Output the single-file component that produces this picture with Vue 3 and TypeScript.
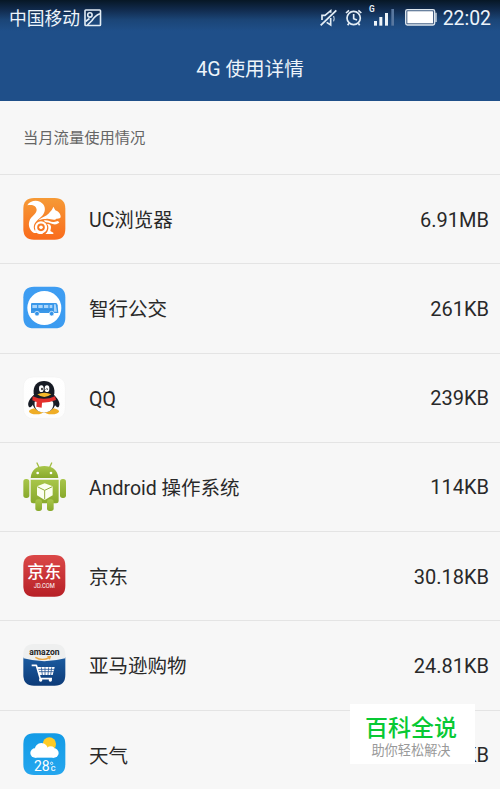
<template>
  <div class="screen">
    <header class="header">
      <div class="status-bar">
        <span class="carrier">中国移动</span>
        <svg class="picture" width="18" height="18" viewBox="0 0 18 18" fill="none" stroke="#e3edf5" stroke-width="1.6">
          <rect x="1" y="1" width="15.5" height="15.5" rx="0.8" />
          <circle cx="5.9" cy="5.9" r="2.2" />
          <path d="M1.5 12.5 L5.5 9.5 M3.5 16 L8 11.5 Q11 6.5 16 4.8" />
        </svg>

        <!-- 静音 / 闹钟 / 信号 / 电池 -->
        <svg class="status-icons" width="120" height="30" viewBox="0 0 360 90">
          <g fill="none" stroke="#e3edf5" stroke-width="5">
            <path d="M6 60 V46 H15 L32 32 V38 M32 54 V75 L20 67" />
            <path d="M2 76 L49 31" stroke-width="5.5" />
            <path d="M41 48 Q44 56 41 64" stroke-width="3" />
            <circle cx="101" cy="54" r="20" />
            <path d="M101 42 V56 L111 60 M78 39 L87 31 M115 31 L124 39 M87 70 L83 76 M115 70 L119 76" />
          </g>
          <text x="147" y="37" class="net">G</text>
          <rect x="162" y="63" width="9" height="14" fill="#eef4f8" />
          <rect x="178" y="51" width="9" height="26" fill="#eef4f8" />
          <rect x="195" y="39" width="9" height="38" fill="#eef4f8" />
          <rect x="214" y="27" width="8" height="50" fill="#58779f" />
          <rect x="257" y="29" width="87" height="46" rx="5" fill="#456085" stroke="#dce5ed" stroke-width="4" />
          <rect x="262" y="34" width="77" height="36" rx="1" fill="#fff" />
          <path d="M346 40 H348 V64 H346" stroke="#dce5ed" stroke-width="4" fill="none" />
        </svg>
        <span class="clock">22:02</span>
      </div>
      <h1 class="title">4G 使用详情</h1>
    </header>

    <div class="section">当月流量使用情况</div>

    <ul class="list">
      <li v-for="app in apps" :key="app.id" class="row">
        <svg class="icon" width="60" height="60" :viewBox="`0 ${app.shift} 180 180`">
          <defs>
            <linearGradient :id="'bg-' + app.id" x1="0" y1="0" x2="0" y2="1">
              <stop offset="0" :stop-color="app.colors[0]" />
              <stop offset="1" :stop-color="app.colors[1]" />
            </linearGradient>
          </defs>
          <path v-if="app.id !== 'android' && app.id !== 'amazon'" :d="tile" :fill="`url(#bg-${app.id})`" />

          <!-- 松鼠 -->
          <g v-if="app.id === 'uc'">
            <path
              d="M37 46 C43 33 62 29 75 35 C91 43 94 60 84 74 C77 84 63 91 58 103 C54 114 58 124 67 129 H57 C44 122 39 107 43 94 C47 79 64 73 65 60 C65 48 52 42 37 46 Z"
              fill="#fff"
            />
            <path
              d="M70 91 C80 82 94 79 102 70 C105 64 112 61 115 50 L121 61 C130 64 138 72 137 82 C134 88 125 84 121 89 C112 91 103 85 93 87 C85 87 77 88 70 91 Z"
              fill="#fff"
            />
            <path d="M86 92 C98 88 106 98 117 96 L129 93 L133 98 L124 103 C112 105 104 97 93 97 Z" fill="#fff" />
            <path d="M96 102 C104 101 109 106 108 113 L106 123 L115 128 V132 H91 C101 124 103 110 96 102 Z" fill="#fff" />
            <circle cx="78" cy="112" r="15" fill="none" stroke="#fff" stroke-width="7" />
            <circle cx="78" cy="112" r="5.5" fill="#fff" />
            <path d="M60 121 Q67 132 83 130" fill="none" stroke="#fff" stroke-width="4" />
          </g>

          <!-- 公交车 -->
          <g v-else-if="app.id === 'bus'">
            <circle cx="88" cy="88" r="51" fill="#fff" />
            <path d="M50 73 H122 Q127 73 128 80 L130 103 H48 V75 Z" fill="#3b98e9" />
            <path d="M52 79 H66 V88 H52 Z M70 79 H83 V88 H70 Z M87 79 H100 V88 H87 Z M104 79 H112 V88 H104 Z M117 77 H122 L126 99 H117 Z" fill="#a9d5fb" />
            <path d="M50 93 H112" stroke="#2e8add" stroke-width="2" />
            <circle cx="66" cy="105" r="7" fill="#3493e8" stroke="#fff" stroke-width="2" />
            <circle cx="110" cy="105" r="7" fill="#3493e8" stroke="#fff" stroke-width="2" />
          </g>

          <!-- 企鹅 -->
          <g v-else-if="app.id === 'qq'">
            <path :d="tile" fill="none" stroke="#efefef" stroke-width="1.5" />
            <ellipse cx="64" cy="127" rx="22" ry="9" fill="#efad27" />
            <ellipse cx="110" cy="127" rx="22" ry="9" fill="#efad27" />
            <path d="M57 78 C41 90 35 107 43 115 C50 116 54 106 58 99 Z M116 78 C132 90 138 107 130 115 C123 116 119 106 115 99 Z" fill="#171c26" />
            <ellipse cx="87" cy="96" rx="36" ry="34" fill="#1c202a" />
            <path d="M59 98 Q87 81 114 98 C119 119 104 130 87 130 C69 130 56 119 59 98 Z" fill="#fff" />
            <path d="M56 74 C53 49 68 36 87 36 C106 36 121 49 118 74 Q112 92 87 93 Q61 92 56 74 Z" fill="#171b24" />
            <ellipse cx="79" cy="59" rx="7" ry="10" fill="#fff" />
            <ellipse cx="96" cy="59" rx="7" ry="10" fill="#fff" />
            <ellipse cx="81" cy="60" rx="2.5" ry="4" fill="#111" />
            <path d="M92 62 Q95 55 99 62" stroke="#111" stroke-width="2.5" fill="none" />
            <path d="M67 76 Q88 66 109 76 Q98 84 88 84 Q76 84 67 76 Z" fill="#f5b92b" />
            <path d="M53 82 Q87 97 120 82 L123 93 Q104 101 81 101 L80 116 L64 113 L65 99 L52 94 Z" fill="#e32f2c" />
          </g>

          <!-- 机器人 -->
          <g v-else-if="app.id === 'android'">
            <g :fill="`url(#bg-${app.id})`">
              <path d="M47 63 C49 38 66 27 88 27 C110 27 128 38 130 63 Z" />
              <path d="M47 68 H131 V132 Q131 139 124 139 H54 Q47 139 47 132 Z" />
              <rect x="25" y="66" width="18" height="57" rx="8" />
              <rect x="135" y="66" width="18" height="57" rx="8" />
              <rect x="61" y="127" width="20" height="35" rx="8" />
              <rect x="96" y="127" width="20" height="35" rx="8" />
            </g>
            <path d="M66 18 L73 33 M110 18 L103 33" stroke="#a3be43" stroke-width="4" stroke-linecap="round" />
            <circle cx="68" cy="48" r="4" fill="#fff" />
            <circle cx="108" cy="48" r="4" fill="#fff" />
            <path d="M89 79 L113 88 V115 L89 129 L66 115 V88 Z" fill="#fbfff0" />
            <path d="M67 89 L89 100 L112 89 M89 100 V127" fill="none" stroke="#90ad35" stroke-width="3" />
          </g>

          <g v-else-if="app.id === 'jd'" fill="#fff" text-anchor="middle">
            <text x="88" y="93" class="jd-name">京东</text>
            <text x="88" y="123" class="jd-url" textLength="63" lengthAdjust="spacingAndGlyphs">JD.COM</text>
          </g>

          <!-- 购物车 -->
          <g v-else-if="app.id === 'amazon'">
            <path d="M25 64 H151 V117 Q151 149 119 149 H57 Q25 149 25 117 Z" :fill="`url(#bg-${app.id})`" />
            <path d="M57 24 H119 Q151 24 151 56 V67 Q88 84 25 67 V56 Q25 24 57 24 Z" fill="#eeefef" />
            <text x="88" y="58" class="amazon" text-anchor="middle" textLength="91" lengthAdjust="spacingAndGlyphs">amazon</text>
            <path d="M61 64 Q82 76 103 65 M97 62 L106 62 L103 70" fill="none" stroke="#eca744" stroke-width="4" />
            <path d="M50 88 H64 L76 128 H111" fill="none" stroke="#fff" stroke-width="5" stroke-linejoin="round" />
            <path d="M67 93 H119 L113 117 H73 Z" fill="#fff" />
            <path d="M70 100 H117 M72 107 H116 M79 94 L82 117 M90 94 V117 M101 94 L99 117 M110 94 L107 117" stroke="#245594" stroke-width="2.4" />
            <circle cx="77" cy="132" r="5" fill="#fff" />
            <circle cx="106" cy="132" r="5" fill="#fff" />
          </g>

          <!-- 多云 28℃ -->
          <g v-else>
            <circle cx="103" cy="56" r="20" fill="#ffcb25" />
            <g fill="#fff">
              <circle cx="79" cy="73" r="20" />
              <circle cx="60" cy="83" r="14" />
              <circle cx="107" cy="75" r="12" />
              <circle cx="117" cy="83" r="14" />
              <rect x="60" y="74" width="57" height="23" />
              <text x="57" y="138" class="temp">28</text>
              <text x="107" y="138" class="unit">C</text>
            </g>
            <circle cx="110" cy="114" r="3.5" fill="none" stroke="#fff" stroke-width="2.5" />
          </g>
        </svg>
        <span class="name">{{ app.name }}</span>
        <span class="usage">{{ app.usage }}</span>
      </li>
    </ul>

    <div class="badge">
      <strong>百科全说</strong>
      <span>助你轻松解决</span>
    </div>
  </div>
</template>

<script setup lang="ts">
interface AppUsage {
  id: string
  name: string
  usage: string
  colors: [string, string]
  shift: number // 图标垂直微调
}

// 图标圆角底板
const tile = 'M57 24 H119 Q151 24 151 56 V117 Q151 149 119 149 H57 Q25 149 25 117 V56 Q25 24 57 24 Z'

const apps: AppUsage[] = [
  { id: 'uc', name: 'UC浏览器', usage: '6.91MB', colors: ['#f69a36', '#f96b1c'], shift: -3 },
  { id: 'bus', name: '智行公交', usage: '261KB', colors: ['#3e9df2', '#3b9bf0'], shift: -2 },
  { id: 'qq', name: 'QQ', usage: '239KB', colors: ['#ffffff', '#fdfdfd'], shift: -3 },
  { id: 'android', name: 'Android 操作系统', usage: '114KB', colors: ['#a8c64a', '#88a92c'], shift: 0 },
  { id: 'jd', name: '京东', usage: '30.18KB', colors: ['#db4848', '#b72026'], shift: -3 },
  { id: 'amazon', name: '亚马逊购物', usage: '24.81KB', colors: ['#1b5ba0', '#0d3b78'], shift: -3 },
  { id: 'weather', name: '天气', usage: 'KB', colors: ['#139be6', '#25a6ee'], shift: -1 },
]
</script>

<style>
body {
  margin: 0;
  overflow: hidden;
}
</style>

<style scoped>
.screen {
  position: relative;
  width: 500px;
  height: 789px;
  overflow: hidden;
  background: #f7f7f7;
  color: #292929;
  font-family: Roboto, "Noto Sans CJK SC", sans-serif;
}

.header {
  height: 101px;
  background: linear-gradient(#071725 0, #10294a 9px, #1b4577 20px, #1f4f89 31px, #1f4f89 100%);
  color: #edf4fa;
}

.status-bar {
  display: flex;
  align-items: center;
  box-sizing: border-box;
  height: 37px;
  padding: 1px 9px 0;
}

.carrier {
  font-size: 17.8px;
  line-height: 36px;
}

.picture {
  margin-left: 4px;
  margin-top: -3px;
}

.status-icons {
  margin-left: auto;
  margin-right: 3px;
  margin-top: -8px;
}

.net {
  font-size: 25px;
  font-weight: 700;
  fill: #e3edf5;
}

.clock {
  font-size: 19.4px;
  line-height: 36px;
}

.title {
  margin: 0;
  font-size: 19.6px;
  font-weight: 400;
  line-height: 65px;
  text-align: center;
}

.section {
  box-sizing: border-box;
  height: 73px;
  padding-left: 23px;
  color: #666;
  font-size: 15.3px;
  line-height: 74px;
}

.list {
  margin: 0;
  padding: 0;
  list-style: none;
}

.row {
  display: flex;
  align-items: center;
  box-sizing: border-box;
  height: 89.25px;
  padding: 0 11px 0 15px;
  border-top: 1px solid #e4e4e4;
}

.icon {
  flex: none;
  margin-right: 14px;
}

.name {
  flex: 1;
  padding-top: 4px;
  font-size: 19.5px;
  line-height: 30px;
}

.usage {
  padding-top: 1px;
  font-size: 20px;
  line-height: 30px;
}

.jd-name {
  font-size: 51px;
  font-weight: 500;
}

.jd-url {
  font-size: 20px;
}

.amazon {
  font-size: 27px;
  font-weight: 700;
  fill: #252525;
}

.temp {
  font-size: 42px;
}

.unit {
  font-size: 22px;
  font-weight: 500;
}

.badge {
  position: absolute;
  left: 350px;
  top: 704px;
  display: flex;
  flex-direction: column;
  align-items: center;
  box-sizing: border-box;
  width: 125px;
  height: 60px;
  padding: 10px 3px 0 0;
  background: #fff;
}

.badge strong {
  color: #08c934;
  font-size: 23px;
  font-weight: 500;
  line-height: 29px;
}

.badge span {
  color: #999;
  font-size: 13.2px;
  line-height: 16px;
}
</style>
